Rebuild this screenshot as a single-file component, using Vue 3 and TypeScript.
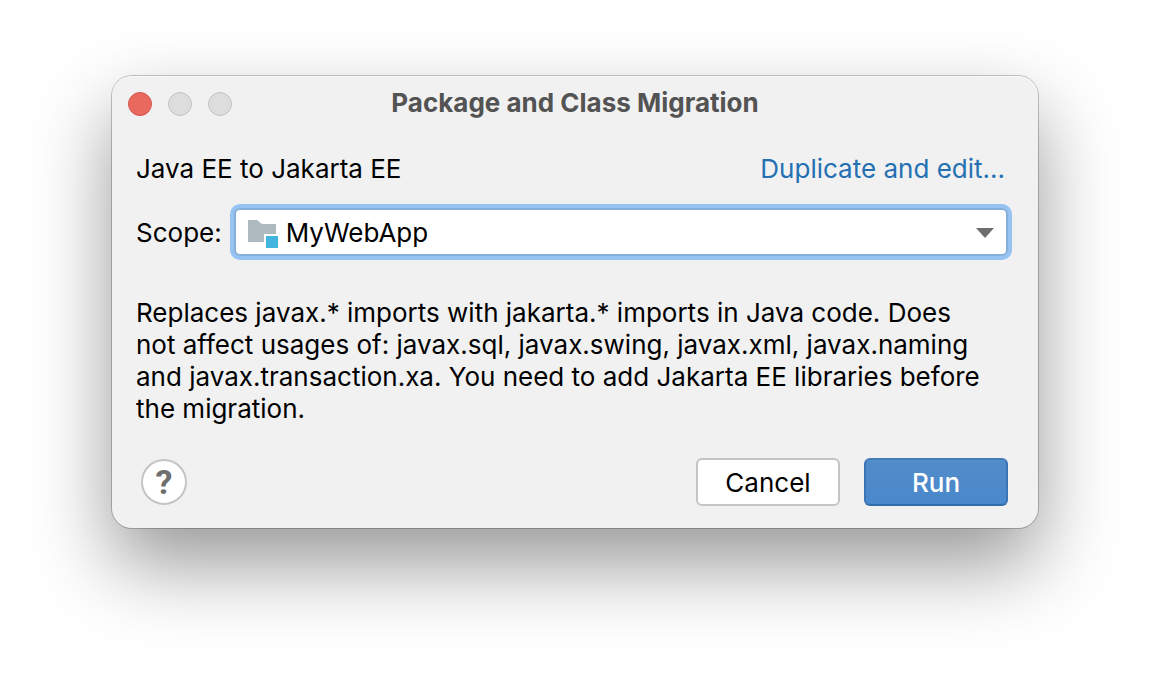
<script setup lang="ts">
import { ref } from 'vue'

const scopes = ['MyWebApp']
const scope = ref(scopes[0])
</script>

<template>
  <main class="desktop">
    <section class="dialog" role="dialog" aria-labelledby="dialog-title">
      <header class="titlebar">
        <div class="lights">
          <button class="light close" type="button" aria-label="Close"></button>
          <button class="light" type="button" aria-label="Minimize" disabled></button>
          <button class="light" type="button" aria-label="Zoom" disabled></button>
        </div>
        <h1 id="dialog-title" class="title">Package and Class Migration</h1>
      </header>

      <div class="content">
        <div class="row">
          <span>Java EE to Jakarta EE</span>
          <a class="link" href="#">Duplicate and edit...</a>
        </div>

        <div class="scope">
          <label for="scope">Scope:</label>
          <div class="combo">
            <select id="scope" v-model="scope">
              <option v-for="item in scopes" :key="item" :value="item">{{ item }}</option>
            </select>
            <svg class="module" viewBox="0 0 30 28" aria-hidden="true">
              <path d="M0 0H8.5Q9.5 0 10.3 1L12.8 3.3Q13.6 4 14.6 4H28V14H16V22H0Z" fill="#aeb9c0" />
              <rect x="18" y="16" width="12" height="12" fill="#41b5e0" />
            </svg>
            <svg class="arrow" viewBox="0 0 18 10" aria-hidden="true">
              <path d="M0 0H18L9 10Z" fill="#6e6e6e" />
            </svg>
          </div>
        </div>

        <p class="description">
          Replaces javax.* imports with jakarta.* imports in Java code. Does not affect usages of:
          javax.sql, javax.swing, javax.xml, javax.naming and javax.transaction.xa. You need to add
          Jakarta EE libraries before the migration.
        </p>

        <footer class="footer">
          <button class="help" type="button" aria-label="Help">?</button>
          <button class="btn" type="button">Cancel</button>
          <button class="btn primary" type="button">Run</button>
        </footer>
      </div>
    </section>
  </main>
</template>

<style>
body {
  margin: 0;
  background: #fff;
}
</style>

<style scoped>
.desktop {
  box-sizing: border-box;
  min-height: 100vh;
  padding: 76px 112px 148px;
  overflow: hidden;
  color: #000;
  font: 400 26px/32px Inter, "Liberation Sans", sans-serif;
}
.dialog {
  border-radius: 20px;
  background: #f1f1f1;
  box-shadow:
    inset 0 1px 0 #fafafa,
    0 0 0 1px rgba(0, 0, 0, 0.22),
    0 36px 80px rgba(0, 0, 0, 0.41);
}
.titlebar {
  display: grid;
  grid-template-columns: 1fr auto 1fr;
  align-items: center;
  height: 56px;
  padding: 0 16px;
}
.lights {
  display: flex;
  gap: 16px;
}
.light {
  box-sizing: border-box;
  width: 24px;
  height: 24px;
  padding: 0;
  border: 1px solid #c4c4c4;
  border-radius: 50%;
  background: #dddddd;
}
.close {
  border-color: #d6554c;
  background: #e9695f;
}
.title {
  margin: 0;
  padding-bottom: 2px;
  color: #535353;
  font-size: 26px;
  font-weight: 700;
  line-height: 32px;
}
.content {
  padding: 21px 30px 22px 24px;
}
.row {
  display: flex;
  justify-content: space-between;
  padding-right: 3px;
}
.link {
  color: #2470b3;
  text-decoration: none;
}
.scope {
  display: flex;
  align-items: center;
  gap: 12px;
  margin-top: 23px;
}
.scope label {
  padding-top: 2px;
}
.combo {
  position: relative;
  flex: 1;
}
.combo select {
  display: block;
  box-sizing: border-box;
  width: 100%;
  height: 48px;
  padding: 2px 48px 0 50px;
  border: 2px solid #87afda;
  border-radius: 6px;
  outline: none;
  appearance: none;
  background: #fff;
  box-shadow: 0 0 0 4px #97c3f3;
  color: #000;
  font: inherit;
}
.module {
  position: absolute;
  left: 14px;
  top: 12px;
  width: 30px;
  height: 28px;
  pointer-events: none;
}
.arrow {
  position: absolute;
  right: 14px;
  top: 20px;
  width: 18px;
  height: 10px;
  pointer-events: none;
}
.description {
  margin: 41px 0 33px;
  padding-right: 20px;
}
.footer {
  display: flex;
  align-items: center;
  gap: 24px;
}
.help {
  box-sizing: border-box;
  width: 46px;
  height: 46px;
  margin: 0 auto 0 5px;
  padding: 0;
  border: 2px solid #c4c4c4;
  border-radius: 50%;
  background: #fff;
  color: #6e6e6e;
  font: 700 34px/42px Roboto, sans-serif;
}
.btn {
  box-sizing: border-box;
  width: 144px;
  height: 48px;
  padding: 2px 0 0;
  border: 2px solid #c4c4c4;
  border-radius: 6px;
  background: #fff;
  color: #000;
  font: inherit;
}
.primary {
  border-color: #437cba #3b74b4 #346dad;
  background: linear-gradient(#528cc9, #4a88cc);
  color: #fff;
  font-weight: 500;
}
</style>
